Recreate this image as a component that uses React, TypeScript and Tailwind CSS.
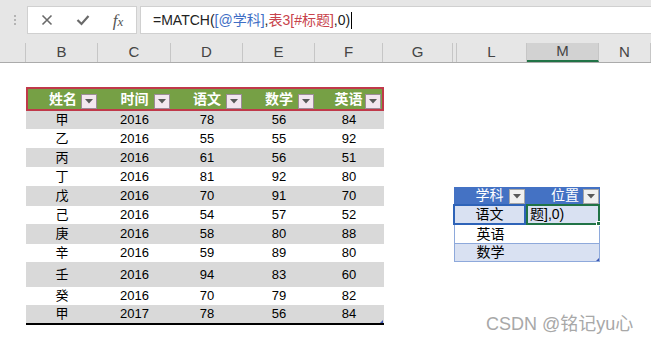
import React from 'react';

const cjk = "font-['Liberation_Sans','Noto_Sans_CJK_SC',sans-serif]";

const rows: { name: string; year: string; a: string; b: string; c: string; h: string }[] = [
    { name: '甲', year: '2016', a: '78', b: '56', c: '84', h: 'h-[18px]' },
    { name: '乙', year: '2016', a: '55', b: '55', c: '92', h: 'h-[19px]' },
    { name: '丙', year: '2016', a: '61', b: '56', c: '51', h: 'h-[19px]' },
    { name: '丁', year: '2016', a: '81', b: '92', c: '80', h: 'h-[19px]' },
    { name: '戊', year: '2016', a: '70', b: '91', c: '70', h: 'h-[20px]' },
    { name: '己', year: '2016', a: '54', b: '57', c: '52', h: 'h-[18px]' },
    { name: '庚', year: '2016', a: '58', b: '80', c: '88', h: 'h-[20px]' },
    { name: '辛', year: '2016', a: '59', b: '89', c: '80', h: 'h-[18px]' },
    { name: '壬', year: '2016', a: '94', b: '83', c: '60', h: 'h-[25px]' },
    { name: '癸', year: '2016', a: '70', b: '79', c: '82', h: 'h-[18px]' },
    { name: '甲', year: '2017', a: '78', b: '56', c: '84', h: 'h-[18px]' },
];

function FilterButton({ pink }: { pink?: boolean }) {
    return (
        <span
            className={`absolute right-[1px] bottom-[0px] w-[16px] h-[15px] flex items-center justify-center border ${
                pink ? 'bg-[#f3e7ef] border-[#9c8c98]' : 'bg-[#f0f0f0] border-[#a6a6a6]'
            }`}
        >
            <svg width="8" height="5" viewBox="0 0 8 5">
                <path d="M0 0 L8 0 L4 4.5 Z" fill="#595959" />
            </svg>
        </span>
    );
}

function ColHead({ label, w, selected }: { label: string; w: string; selected?: boolean }) {
    return (
        <div
            className={`${w} h-full flex items-center justify-center border-r border-[#c6c6c6] text-[15px] text-[#444] ${
                selected ? 'bg-[#d2d2d2] border-b-2 border-b-[#217346]' : ''
            }`}
        >
            {label}
        </div>
    );
}

export default function App() {
    const cols = ['w-[72px]', 'w-[73px]', 'w-[72px]', 'w-[72px]', 'w-[68px]'];
    return (
        <div className={`w-[651px] h-[345px] overflow-hidden bg-white flex flex-col ${cjk}`}>
            {/* formula bar */}
            <div className="h-[43px] bg-[#e6e6e6] flex items-start pt-[6px]">
                <div className="w-[27px] h-[27px] flex flex-col items-center justify-center gap-[2px] pl-[2px]">
                    <span className="w-[2px] h-[2px] bg-[#b4b4b4]" />
                    <span className="w-[2px] h-[2px] bg-[#b4b4b4]" />
                    <span className="w-[2px] h-[2px] bg-[#b4b4b4]" />
                </div>
                <div className="w-[110px] h-[28px] bg-white border border-[#d0d0d0] flex items-center">
                    <span className="w-[37px] flex justify-center">
                        <svg width="12" height="12" viewBox="0 0 12 12">
                            <path d="M1.5 1.5 L10.5 10.5 M10.5 1.5 L1.5 10.5" stroke="#6a6a6a" strokeWidth="1.6" />
                        </svg>
                    </span>
                    <span className="w-[35px] flex justify-center">
                        <svg width="14" height="12" viewBox="0 0 14 12">
                            <path d="M1.5 6 L5.5 10 L12.5 2" stroke="#6a6a6a" strokeWidth="2.2" fill="none" />
                        </svg>
                    </span>
                    <span className="w-[36px] flex justify-center items-baseline font-['Liberation_Serif',serif] italic text-[17px] text-[#555] leading-none">
                        f<span className="text-[13px]">x</span>
                    </span>
                </div>
                <div className="ml-[3px] flex-1 h-[28px] bg-white border border-[#d0d0d0] border-r-0 flex items-center pl-[12px] text-[14px] text-[#222]">
                    <span>=MATCH(</span>
                    <span className="text-[#3e6ec5]">[@学科]</span>
                    <span>,</span>
                    <span className="text-[#c8434c]">表3[#标题]</span>
                    <span>,0)</span>
                    <span className="ml-[1px] w-[1px] h-[17px] bg-black" />
                </div>
            </div>

            {/* column headers */}
            <div className="h-[20px] bg-[#e6e6e6] flex border-b border-[#ababab]">
                <div className="w-[26px] h-full border-r border-[#c6c6c6]" />
                <ColHead label="B" w="w-[72px]" />
                <ColHead label="C" w="w-[73px]" />
                <ColHead label="D" w="w-[72px]" />
                <ColHead label="E" w="w-[72px]" />
                <ColHead label="F" w="w-[68px]" />
                <ColHead label="G" w="w-[70px]" />
                <div className="w-[4px] h-full border-r border-[#c6c6c6]" />
                <ColHead label="L" w="w-[70px]" />
                <ColHead label="M" w="w-[72px]" selected />
                <ColHead label="N" w="w-[52px]" />
            </div>

            {/* sheet */}
            <div className="flex-1 flex relative">
                <div className="ml-[26px] mt-[24px] w-[358px] flex flex-col">
                    <div className="h-[24px] border-2 border-[#c0394a] bg-[#76a045] flex text-white text-[14px] font-semibold">
                        {['姓名', '时间', '语文', '数学', '英语'].map((t, i) => (
                            <div
                                key={t}
                                className={`${i === 0 ? 'w-[70px]' : i === 4 ? 'w-[67px]' : cols[i]} relative flex items-center justify-center pt-[1px]`}
                            >
                                {t}
                                <FilterButton pink />
                            </div>
                        ))}
                    </div>
                    {rows.map((r, i) => (
                        <div
                            key={i}
                            className={`${r.h} flex items-center text-[13px] text-black ${i % 2 === 0 ? 'bg-[#d9d9d9]' : 'bg-white'}`}
                        >
                            <div className="w-[72px] text-center">{r.name}</div>
                            <div className="w-[73px] text-center">{r.year}</div>
                            <div className="w-[72px] text-center">{r.a}</div>
                            <div className="w-[72px] text-center">{r.b}</div>
                            <div className="w-[68px] text-center">{r.c}</div>
                        </div>
                    ))}
                    <div className="h-[2px] bg-black relative">
                        <span className="absolute right-[1px] -top-[3px] w-0 h-0 border-l-[3px] border-l-transparent border-b-[3px] border-b-[#3b56b5]" />
                    </div>
                </div>

                {/* lookup table */}
                <div className="ml-[70px] mt-[124px] w-[146px] flex flex-col self-start text-[14px]">
                    <div className="h-[17px] bg-[#4472c4] flex text-white">
                        <div className="w-[72px] relative flex items-center justify-center pr-[1px]">
                            学科
                            <FilterButton />
                        </div>
                        <div className="w-[74px] relative flex items-center justify-center pl-[4px]">
                            位置
                            <FilterButton />
                        </div>
                    </div>
                    <div className="h-[21px] flex bg-[#d9e1f2]">
                        <div className="w-[73px] -ml-[1px] border-2 border-[#2e63b8] flex items-center justify-center text-black">
                            语文
                        </div>
                        <div className="w-[74px] relative border-2 border-[#217346] flex items-center pl-[2px] text-black">
                            题],0)
                            <span className="absolute -right-[3px] -bottom-[3px] w-[5px] h-[5px] bg-[#217346] border border-white" />
                        </div>
                    </div>
                    <div className="h-[18px] flex bg-white border-x border-[#8ea9db]">
                        <div className="w-[71px] flex items-center justify-center text-black">英语</div>
                        <div className="flex-1" />
                    </div>
                    <div className="h-[19px] flex bg-[#d9e1f2] border border-[#8ea9db] relative">
                        <div className="w-[71px] flex items-center justify-center text-black">数学</div>
                        <div className="flex-1" />
                        <span className="absolute right-0 bottom-0 w-0 h-0 border-l-[3px] border-l-transparent border-b-[3px] border-b-[#3b56b5]" />
                    </div>
                </div>

                <span className="absolute left-[486px] top-[248px] text-[18px] text-[#a8a8a8] [text-shadow:0_0_1px_#fff]">
                    CSDN @铭记yu心
                </span>
            </div>
        </div>
    );
}
